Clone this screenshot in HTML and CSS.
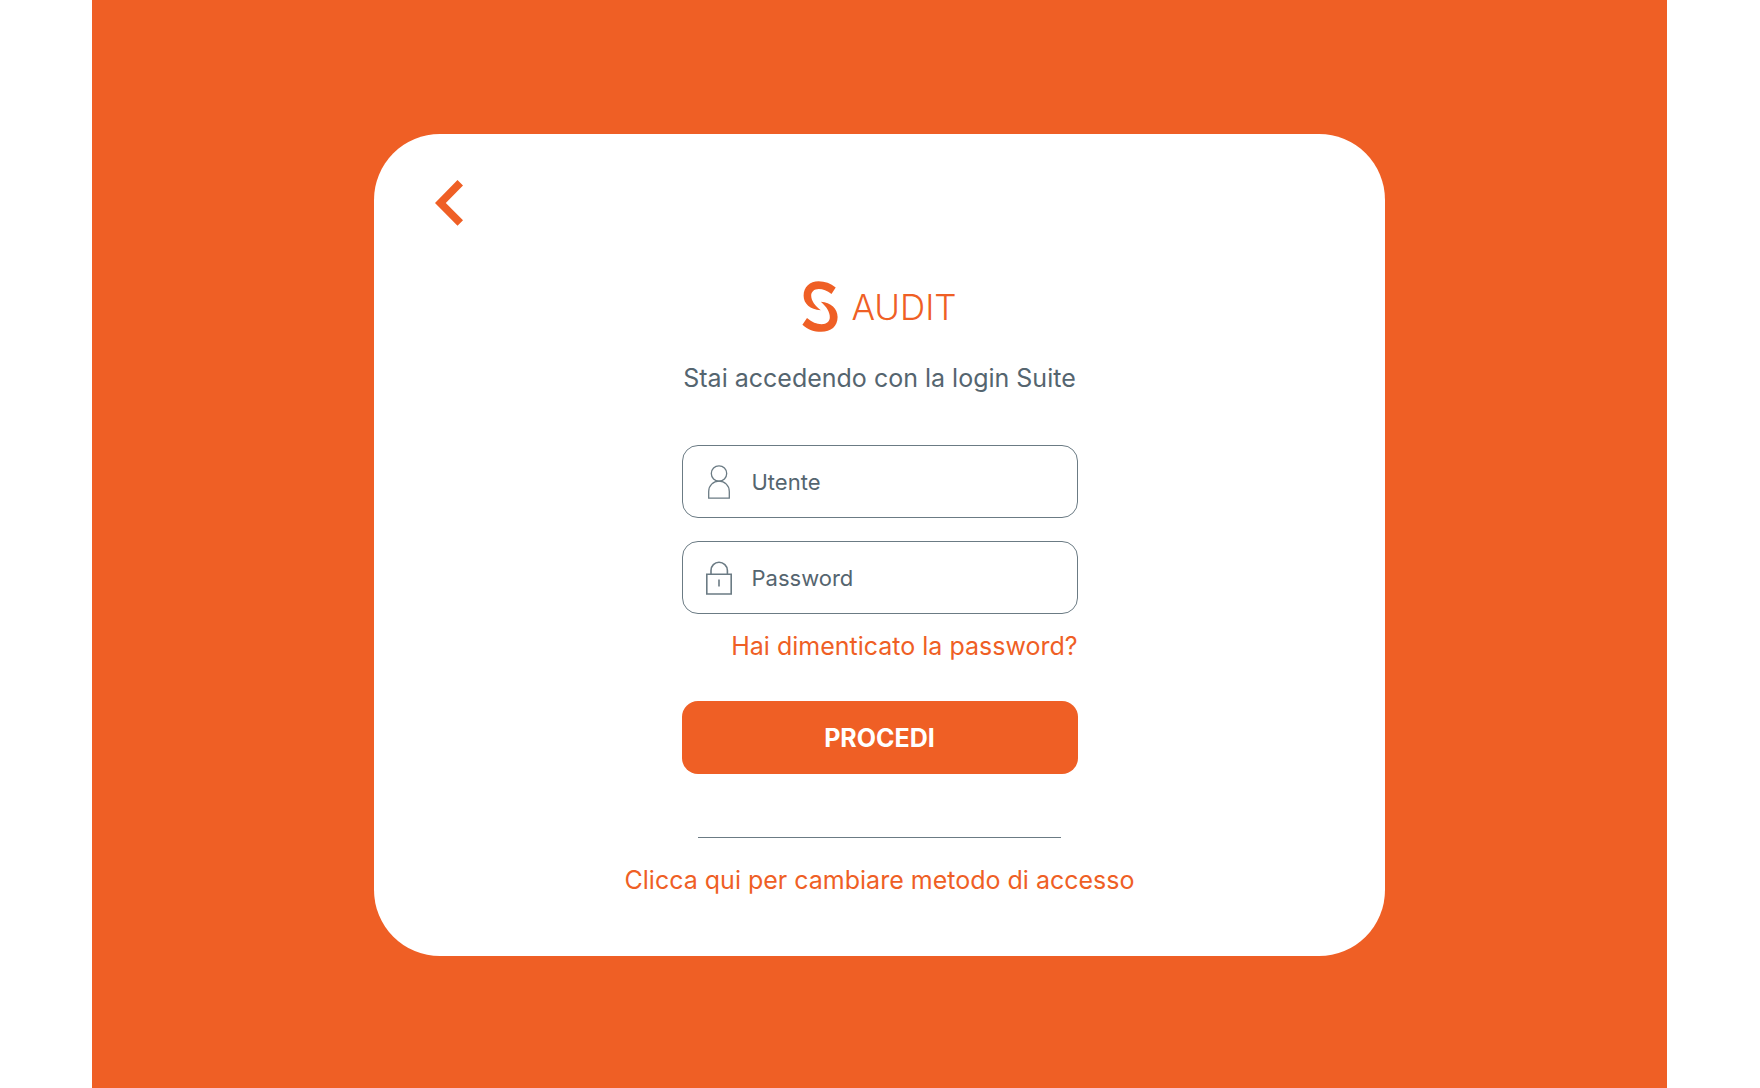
FILE: index.html
```html
<!DOCTYPE html>
<html lang="it">
<head>
    <meta charset="UTF-8">
    <meta name="viewport" content="width=device-width, initial-scale=1.0">
    <title>Audit - Login</title>
    <link rel="stylesheet" href="styles.css">
</head>
<body>

<main class="page">
    <div class="card">
        <button type="button" class="back" aria-label="Indietro">
            <svg width="28" height="46" viewBox="0 0 28 46">
                <path d="M22.5 0 28 5.5 10.8 23 28 40.2 22.5 45.7 0 23Z" fill="currentColor"/>
            </svg>
        </button>

        <h1 class="logo">
            <svg width="36" height="51" viewBox="0 0 36 51" aria-hidden="true">
                <path d="M33.7 6.5 29.5 12.9C25 9.6 21 8 16.8 8C12 8 9.2 10.8 9.2 14.8C9.2 19.5 13 25 18.8 29.2C8 28.5 1.6 22.8 1.6 14.5C1.6 6 7.8 .3 16.6 .3C23 .3 28.6 2.3 33.7 6.5Z" fill="currentColor"/>
                <path d="M.4 43.7 5 37.1C10 41.3 14.5 43.2 19.6 43.2C24.8 43.2 27.8 40.5 27.8 36.3C27.8 31 24.8 26 18.8 20.7C29 21.5 35.6 27.5 35.6 36C35.6 45.3 29 50.8 19.2 50.8C12 50.8 6 48.6 .4 43.7Z" fill="currentColor"/>
            </svg>
            <span>AUDIT</span>
        </h1>

        <p class="intro">Stai accedendo con la login Suite</p>

        <form class="form">
            <label class="field">
                <svg width="26" height="36" viewBox="0 0 26 36" aria-hidden="true">
                    <circle cx="13" cy="9.5" r="7.7"/>
                    <path d="M2.7 34.2V27.5C2.7 21.5 7.2 17.2 13 17.2S23.3 21.5 23.3 27.5V34.2Z"/>
                </svg>
                <input type="text" name="utente" placeholder="Utente" aria-label="Utente">
            </label>
            <label class="field">
                <svg class="lock" width="26" height="36" viewBox="0 0 26 36" aria-hidden="true">
                    <path d="M.8 14.2H25.2V34H.8ZM5 14.2V10.5C5 5.8 8.6 2.3 13 2.3S21.4 5.8 21.4 10.5V14.2M13 19.5V26.5"/>
                </svg>
                <input type="password" name="password" placeholder="Password" aria-label="Password">
            </label>
            <a class="forgot" href="#">Hai dimenticato la password?</a>
            <button type="submit" class="submit">PROCEDI</button>
        </form>

        <hr class="divider">
        <a class="switch" href="#">Clicca qui per cambiare metodo di accesso</a>
    </div>
</main>

</body>
</html>
```

FILE: styles.css
```css
* {
    box-sizing: border-box;
}
body {
    margin: 0;
    background-color: #fff;
    font-family: Inter, "Open Sans", sans-serif;
    font-size: 25px;
    line-height: 32px;
    color: #55656f;
}
.page {
    display: flex;
    justify-content: center;
    align-items: flex-start;
    min-height: 100vh;
    margin: 0 93px 0 92px;
    padding: 134px 24px;
    background-color: #ef5f25;
}
.card {
    display: flex;
    flex-direction: column;
    align-items: center;
    width: 100%;
    max-width: 1011px;
    padding: 46px 61px 60px;
    background-color: #fff;
    border-radius: 66px;
}
.back {
    align-self: flex-start;
    padding: 0;
    border: none;
    background: none;
    color: #ef5f25;
    cursor: pointer;
}
svg {
    display: block;
    flex: none;
}
.logo {
    display: flex;
    align-items: center;
    gap: 13px;
    margin: 55px 0 30px;
    font-size: 35px;
    font-weight: 300;
    color: #ef5f25;
}
.intro {
    margin: 0 0 51px;
}
.form {
    display: flex;
    flex-direction: column;
    width: 100%;
    max-width: 396px;
}
.field {
    display: flex;
    align-items: center;
    gap: 20px;
    height: 73px;
    margin-bottom: 23px;
    padding: 0 23px;
    border: 1px solid #6b7b84;
    border-radius: 16px;
}
.field svg {
    fill: none;
    stroke: #6b7b84;
    stroke-width: 1.3;
}
.field .lock {
    stroke-width: 1.6;
}
.field input {
    flex: 1;
    min-width: 0;
    padding: 0;
    border: none;
    outline: none;
    background: none;
    font: inherit;
    font-size: 22px;
    color: inherit;
}
.field input::placeholder {
    color: #55656f;
    opacity: 1;
}
a {
    color: #ef5f25;
    text-decoration: none;
}
a:hover {
    text-decoration: underline;
}
.forgot {
    align-self: flex-end;
    margin: -7px 0 39px;
}
.submit {
    height: 73px;
    border: none;
    border-radius: 16px;
    background-color: #ef5f25;
    color: #fff;
    font: inherit;
    font-weight: 700;
    cursor: pointer;
}
.divider {
    width: 100%;
    max-width: 363px;
    margin: 63px 0 26px;
    border: none;
    border-top: 1px solid #6b7b84;
}
```
